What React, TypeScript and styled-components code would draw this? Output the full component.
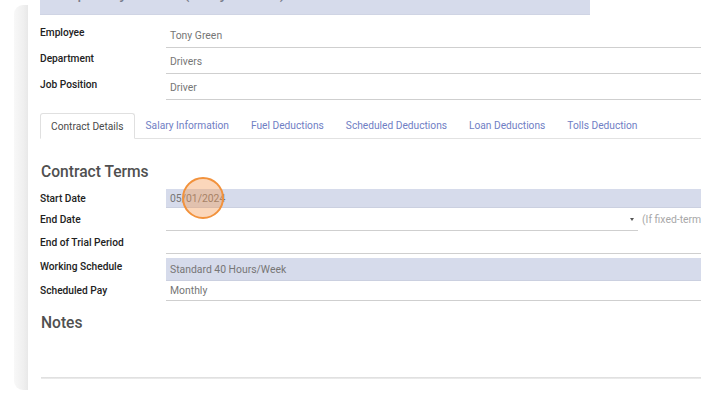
import React from 'react'
import styled, { createGlobalStyle } from 'styled-components'

const GlobalStyle = createGlobalStyle`
  html, body {
    margin: 0;
    padding: 0;
    background: #ffffff;
    overflow: hidden;
  }
  body {
    font-family: Roboto, "Liberation Sans", Arial, sans-serif;
  }
`

const Page = styled.div`
  position: relative;
  width: 715px;
  height: 399px;
  display: flex;
  align-items: flex-start;
  padding-left: 14px;
  box-sizing: border-box;
  overflow: hidden;
`

// grey strip on the left = shadow of the sheet
const SheetShadow = styled.div`
  flex: 0 0 14px;
  height: 385px;
  margin-top: 5px;
  border-radius: 9px 0 0 9px;
  background: linear-gradient(to right, #f8f8f8, #efefef 70%, #e8e8e8);
`

const Sheet = styled.div`
  flex: 0 0 661px;
  padding-left: 12px;
  overflow: hidden;
`

const TitleBanner = styled.div`
  width: 550px;
  height: 15px;
  background: #d6dbeb;
  border-bottom: 1px solid #cfd4e4;
  box-sizing: border-box;
  overflow: hidden;
`

// scrolled page: only the descenders of the title still show
const TitleText = styled.div`
  margin-top: -17px;
  padding-left: 2px;
  font-size: 18px;
  line-height: 18px;
  color: #7a7e8c;
  white-space: nowrap;
`

const TopGrid = styled.div`
  display: grid;
  grid-template-columns: 126px 1fr;
  row-gap: 2px;
  margin-top: 9px;
`

const Label = styled.div<{ $top?: boolean }>`
  font-size: 10.2px;
  font-weight: 500;
  color: #222;
  line-height: 16px;
  align-self: ${(p) => (p.$top ? 'start' : 'center')};
  padding-top: ${(p) => (p.$top ? '1px' : '0')};
  white-space: nowrap;
`

const Field = styled.div<{ $h: number; $shaded?: boolean; $line?: boolean }>`
  height: ${(p) => p.$h}px;
  box-sizing: border-box;
  display: flex;
  align-items: center;
  padding-left: 4px;
  font-size: 10.4px;
  color: #767676;
  background: ${(p) => (p.$shaded ? '#d6dbeb' : 'transparent')};
  border-bottom: ${(p) =>
    p.$line ? '1px solid #cfcfcf' : p.$shaded ? '1px solid #cbd0e0' : 'none'};
  white-space: nowrap;
`

const Tabs = styled.div`
  display: flex;
  margin-top: 13px;
  border-bottom: 1px solid #e2e2e2;
  height: 25px;
`

const Tab = styled.div<{ $active?: boolean }>`
  box-sizing: border-box;
  padding: 0 10px;
  display: flex;
  align-items: center;
  font-size: 10.2px;
  white-space: nowrap;
  color: ${(p) => (p.$active ? '#4a4a4a' : '#6f7ec4')};
  border: 1px solid ${(p) => (p.$active ? '#e0e0e0' : 'transparent')};
  border-bottom-color: ${(p) => (p.$active ? '#ffffff' : 'transparent')};
  border-radius: 3px 3px 0 0;
  background: #fff;
  margin-bottom: ${(p) => (p.$active ? '-1px' : '0')};
  height: ${(p) => (p.$active ? '26px' : '25px')};
`

const Heading = styled.div<{ $mt: number }>`
  margin-top: ${(p) => p.$mt}px;
  padding-left: 1px;
  font-size: 15.6px;
  font-weight: 500;
  line-height: 22px;
  color: #505050;
`

const TermsGrid = styled.div`
  display: grid;
  grid-template-columns: 126px 1fr;
  margin-top: 6px;
`

const Spacer = styled.div`
  grid-column: 1 / 3;
  height: 4px;
`

const DateWrap = styled.div`
  display: flex;
  align-items: center;
`

const DateInput = styled.div`
  flex: 0 0 472px;
  height: 23px;
  box-sizing: border-box;
  border-bottom: 1px solid #cfcfcf;
  display: flex;
  align-items: center;
  justify-content: flex-end;
  padding-right: 4px;
`

const Caret = styled.span`
  width: 0;
  height: 0;
  border-left: 2.5px solid transparent;
  border-right: 2.5px solid transparent;
  border-top: 3px solid #555;
`

const Hint = styled.span`
  margin-left: 4px;
  font-size: 10.4px;
  color: #a8a8a8;
  white-space: nowrap;
`

const BottomRule = styled.div`
  margin-top: 43px;
  margin-left: 1px;
  height: 2px;
  background: linear-gradient(#dcdcdc, #eeeeee);
`

const ClickMarker = styled.div`
  position: absolute;
  left: 182px;
  top: 177px;
  width: 42px;
  height: 42px;
  box-sizing: border-box;
  border-radius: 50%;
  border: 2px solid #f2923c;
  background: rgba(245, 150, 75, 0.38);
`

const tabs = [
  'Contract Details',
  'Salary Information',
  'Fuel Deductions',
  'Scheduled Deductions',
  'Loan Deductions',
  'Tolls Deduction',
]

export default function App() {
  return (
    <>
      <GlobalStyle />
      <Page>
        <SheetShadow />
        <Sheet>
          <TitleBanner>
            <TitleText>Temporary Driver (Tony Green)</TitleText>
          </TitleBanner>

          <TopGrid>
            <Label $top>Employee</Label>
            <Field $h={24} $line>Tony Green</Field>
            <Label $top>Department</Label>
            <Field $h={24} $line>Drivers</Field>
            <Label $top>Job Position</Label>
            <Field $h={24} $line>Driver</Field>
          </TopGrid>

          <Tabs>
            {tabs.map((t, i) => (
              <Tab key={t} $active={i === 0}>
                {t}
              </Tab>
            ))}
          </Tabs>

          <Heading $mt={22}>Contract Terms</Heading>

          <TermsGrid>
            <Label>Start Date</Label>
            <Field $h={19} $shaded>05/01/2024</Field>

            <Label>End Date</Label>
            <DateWrap>
              <DateInput>
                <Caret />
              </DateInput>
              <Hint>(If fixed-term contract)</Hint>
            </DateWrap>

            <Label>End of Trial Period</Label>
            <Field $h={23} $line />

            <Spacer />

            <Label $top>Working Schedule</Label>
            <Field $h={23} $shaded>Standard 40 Hours/Week</Field>

            <Label>Scheduled Pay</Label>
            <Field $h={20} $line>Monthly</Field>
          </TermsGrid>

          <Heading $mt={11}>Notes</Heading>
          <BottomRule />
        </Sheet>
        <ClickMarker />
      </Page>
    </>
  )
}
